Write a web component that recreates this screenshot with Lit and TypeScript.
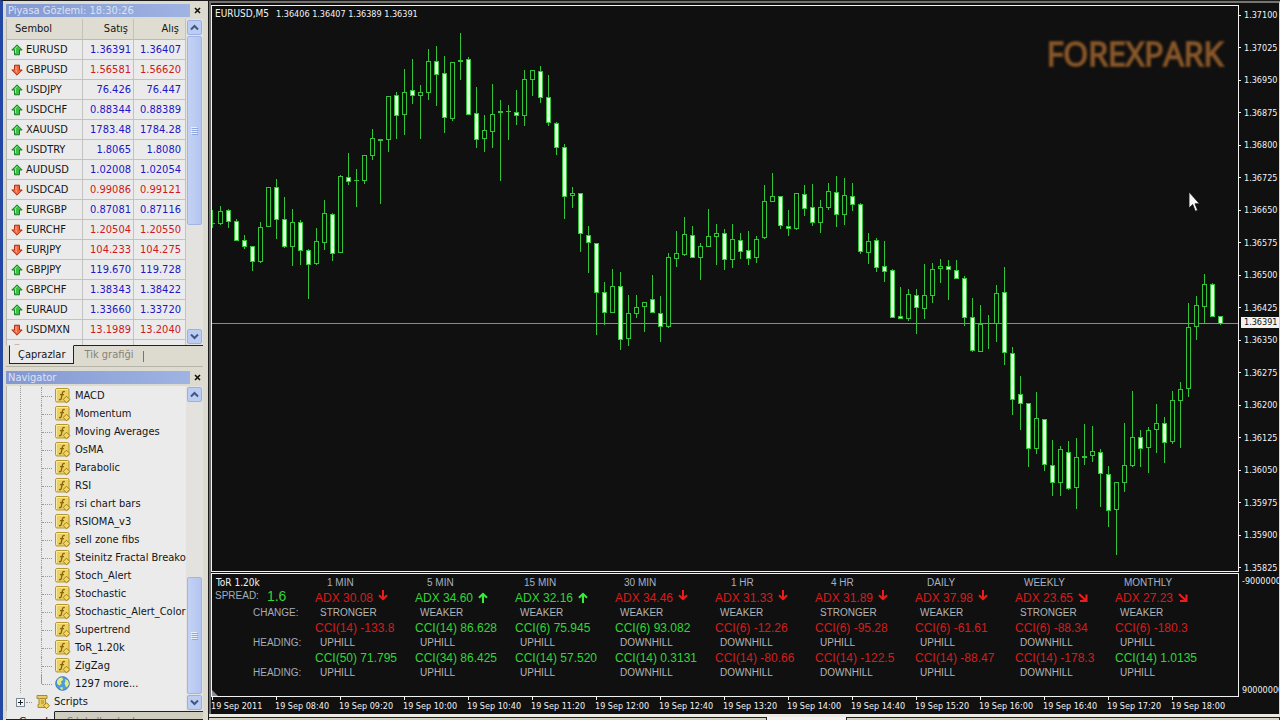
import { LitElement, html, svg, css } from "lit";
import { customElement, state } from "lit/decorators.js";
import { classMap } from "lit/directives/class-map.js";

type Quote = [symbol: string, bid: string, ask: string, up: boolean];
const QUOTES: Quote[] = [
  ["EURUSD", "1.36391", "1.36407", true],
  ["GBPUSD", "1.56581", "1.56620", false],
  ["USDJPY", "76.426", "76.447", true],
  ["USDCHF", "0.88344", "0.88389", true],
  ["XAUUSD", "1783.48", "1784.28", true],
  ["USDTRY", "1.8065", "1.8080", true],
  ["AUDUSD", "1.02008", "1.02054", true],
  ["USDCAD", "0.99086", "0.99121", false],
  ["EURGBP", "0.87081", "0.87116", true],
  ["EURCHF", "1.20504", "1.20550", false],
  ["EURJPY", "104.233", "104.275", false],
  ["GBPJPY", "119.670", "119.728", true],
  ["GBPCHF", "1.38343", "1.38422", true],
  ["EURAUD", "1.33660", "1.33720", true],
  ["USDMXN", "13.1989", "13.2040", false],
  ["", "", "", false],
];

const INDICATORS = [
  "MACD", "Momentum", "Moving Averages", "OsMA", "Parabolic", "RSI",
  "rsi chart bars", "RSIOMA_v3", "sell zone fibs", "Steinitz Fractal Breakout",
  "Stoch_Alert", "Stochastic", "Stochastic_Alert_Color", "Supertrend",
  "ToR_1.20k", "ZigZag",
];

const PRICES = [
  "1.37100", "1.37025", "1.36950", "1.36875", "1.36800", "1.36725",
  "1.36650", "1.36575", "1.36500", "1.36425", "1.36350", "1.36275",
  "1.36200", "1.36125", "1.36050", "1.35975", "1.35900", "1.35825",
];

const TIMES = [
  "2011", "08:40", "09:20", "10:00", "10:40", "11:20", "12:00", "12:40",
  "13:20", "14:00", "14:40", "15:20", "16:00", "16:40", "17:20", "18:00",
];

// Each bar: high, body top, body bottom, low; the last item is 1 for a falling bar.
const STEP = 8;
const LEFT = 212;
const TOP = 6;
const LAST_PRICE = 323;
const BARS: [number, number, number, number, number][] = [
  [210, 223, 224, 228, 0], [206, 211, 224, 225, 0], [209, 210, 222, 228, 1],
  [219, 221, 241, 241, 1], [235, 240, 247, 249, 1], [246, 246, 262, 271, 1],
  [222, 227, 262, 263, 0], [187, 187, 227, 227, 0], [179, 187, 220, 239, 1],
  [197, 219, 247, 248, 1], [209, 222, 247, 266, 0], [220, 222, 251, 265, 1],
  [249, 250, 265, 299, 1], [228, 241, 264, 265, 0], [200, 213, 243, 250, 0],
  [213, 214, 254, 261, 1], [175, 176, 253, 253, 0], [153, 177, 182, 185, 1],
  [169, 180, 181, 207, 0], [155, 155, 181, 184, 0], [129, 138, 156, 160, 0],
  [139, 139, 141, 204, 0], [96, 96, 140, 152, 0], [92, 95, 116, 139, 1],
  [69, 92, 115, 135, 0], [59, 90, 96, 104, 1], [85, 92, 96, 139, 0],
  [49, 61, 93, 100, 0], [46, 61, 75, 106, 1], [56, 73, 118, 133, 1],
  [62, 62, 119, 121, 0], [33, 60, 62, 80, 0], [57, 59, 115, 115, 1],
  [87, 113, 140, 148, 1], [115, 130, 139, 152, 0], [84, 114, 132, 148, 0],
  [100, 111, 113, 181, 0], [105, 111, 112, 140, 0], [90, 112, 116, 125, 1],
  [70, 79, 116, 126, 0], [70, 70, 80, 96, 0], [66, 71, 98, 103, 1],
  [75, 97, 123, 126, 1], [122, 123, 148, 155, 1], [144, 147, 197, 219, 1],
  [187, 193, 196, 208, 0], [193, 193, 234, 252, 1], [226, 235, 243, 273, 1],
  [243, 243, 293, 335, 1], [282, 292, 313, 325, 1], [269, 286, 313, 313, 0],
  [272, 286, 340, 350, 1], [295, 313, 339, 346, 0], [295, 307, 314, 318, 0],
  [302, 302, 307, 332, 0], [275, 299, 313, 313, 1], [296, 313, 327, 342, 1],
  [253, 257, 327, 328, 0], [231, 253, 259, 267, 0], [217, 234, 255, 256, 0],
  [226, 235, 258, 258, 1], [243, 246, 258, 280, 0], [209, 236, 247, 247, 0],
  [224, 233, 237, 265, 0], [229, 233, 260, 270, 1], [224, 239, 260, 268, 0],
  [233, 240, 252, 259, 1], [231, 250, 259, 265, 1], [236, 239, 258, 263, 0],
  [185, 201, 238, 239, 0], [173, 196, 202, 202, 0], [196, 196, 226, 229, 1],
  [210, 226, 229, 236, 1], [193, 193, 229, 230, 0], [185, 194, 209, 216, 1],
  [184, 207, 223, 226, 1], [200, 207, 223, 233, 0], [183, 191, 208, 210, 0],
  [176, 192, 215, 227, 1], [178, 195, 215, 225, 0], [183, 196, 205, 211, 1],
  [203, 204, 252, 254, 1], [233, 241, 253, 264, 0], [238, 240, 268, 272, 1],
  [241, 266, 272, 282, 1], [269, 270, 318, 318, 1], [287, 316, 319, 319, 1],
  [289, 294, 319, 321, 0], [289, 295, 308, 334, 1], [264, 295, 309, 319, 0],
  [263, 269, 296, 303, 0], [259, 266, 269, 283, 0], [260, 266, 270, 300, 1],
  [260, 270, 279, 279, 1], [276, 278, 318, 326, 1], [298, 317, 351, 352, 1],
  [305, 324, 352, 352, 0], [315, 323, 324, 349, 0], [285, 293, 324, 342, 0],
  [267, 292, 353, 365, 1], [347, 353, 400, 415, 1], [376, 394, 404, 430, 1],
  [403, 403, 449, 467, 1], [392, 418, 449, 454, 0], [419, 419, 465, 471, 1],
  [440, 465, 483, 496, 1], [446, 449, 483, 496, 0], [441, 452, 489, 490, 1],
  [438, 457, 488, 509, 0], [424, 456, 458, 465, 0], [426, 451, 456, 462, 0],
  [449, 452, 474, 507, 1], [466, 474, 511, 527, 1], [482, 482, 510, 555, 0],
  [423, 465, 483, 492, 0], [391, 437, 466, 467, 0], [430, 437, 449, 467, 1],
  [427, 430, 448, 473, 0], [404, 423, 430, 453, 0], [417, 423, 443, 463, 1],
  [391, 400, 442, 444, 0], [382, 389, 401, 448, 0], [303, 327, 389, 397, 0],
  [296, 305, 327, 340, 0], [274, 284, 307, 323, 0], [283, 284, 317, 317, 1],
  [316, 316, 324, 325, 1],
];

type Dir = "up" | "down" | "ease";
interface Frame {
  name: string;
  indent: string;
  adx: string;
  dir: Dir;
  change: string;
  cci: [text: string, good: boolean, heading: string][];
}
const FRAMES: Frame[] = [
  { name: "1 MIN", indent: "mid", adx: "30.08", dir: "down", change: "STRONGER", cci: [["CCI(14) -133.8", false, "UPHILL"], ["CCI(50) 71.795", true, "UPHILL"]] },
  { name: "5 MIN", indent: "mid", adx: "34.60", dir: "up", change: "WEAKER", cci: [["CCI(14) 86.628", true, "UPHILL"], ["CCI(34) 86.425", true, "UPHILL"]] },
  { name: "15 MIN", indent: "near", adx: "32.16", dir: "up", change: "WEAKER", cci: [["CCI(6) 75.945", true, "UPHILL"], ["CCI(14) 57.520", true, "UPHILL"]] },
  { name: "30 MIN", indent: "near", adx: "34.46", dir: "down", change: "WEAKER", cci: [["CCI(6) 93.082", true, "DOWNHILL"], ["CCI(14) 0.3131", true, "DOWNHILL"]] },
  { name: "1 HR", indent: "far", adx: "31.33", dir: "down", change: "WEAKER", cci: [["CCI(6) -12.26", false, "DOWNHILL"], ["CCI(14) -80.66", false, "DOWNHILL"]] },
  { name: "4 HR", indent: "far", adx: "31.89", dir: "down", change: "STRONGER", cci: [["CCI(6) -95.28", false, "UPHILL"], ["CCI(14) -122.5", false, "DOWNHILL"]] },
  { name: "DAILY", indent: "mid", adx: "37.98", dir: "down", change: "WEAKER", cci: [["CCI(6) -61.61", false, "UPHILL"], ["CCI(14) -88.47", false, "UPHILL"]] },
  { name: "WEEKLY", indent: "near", adx: "23.65", dir: "ease", change: "STRONGER", cci: [["CCI(6) -88.34", false, "DOWNHILL"], ["CCI(14) -178.3", false, "DOWNHILL"]] },
  { name: "MONTHLY", indent: "near", adx: "27.23", dir: "ease", change: "WEAKER", cci: [["CCI(6) -180.3", false, "UPHILL"], ["CCI(14) 1.0135", true, "UPHILL"]] },
];

const ARROWS: Record<Dir, string> = {
  down: "M5 0V9M1 5.2L5 9.2L9 5.2",
  up: "M5 13V4M1 7.8L5 3.8L9 7.8",
  ease: "M1 4L8 10.5M8.5 4.5V11H2",
};

const quoteIcon = (up: boolean) => html`<svg class="qicon" viewBox="0 0 12 12" width="12" height="12" aria-hidden="true">
  ${up
    ? svg`<path d="M6 .8L11.2 6H8.5V10.8H3.5V6H.8Z" fill="#3fc044" stroke="#1b7a2a"/><path d="M6 2.5L4.5 4.5V9" fill="none" stroke="#9bec98"/>`
    : svg`<path d="M6 11.2L11.2 6H8.5V1.2H3.5V6H.8Z" fill="#f0643c" stroke="#a33218"/><path d="M5 2.5V7L6 8.5" fill="none" stroke="#ffb498"/>`}
</svg>`;

const fIcon = html`<svg class="ticon" viewBox="0 0 16 16" width="16" height="16" aria-hidden="true">
  <rect x=".5" y=".5" width="13.5" height="13.5" rx="1.5" fill="#ecd163" stroke="#b8962e"/>
  <path d="M1.5 13V1.5H13" fill="none" stroke="#f8eaa0"/>
  <path d="M9.8 3.6C8.2 2.8 7.6 4 7.3 5.6L6.3 10.4C6.1 11.6 5.2 12 4 11.4M5 6.6H9" fill="none" stroke="#8a6510" stroke-width="1.4"/>
  <path d="M11.5 8.2L14.8 11.5L11.5 14.8L8.2 11.5Z" fill="#f2d95c" stroke="#a07c1c"/>
</svg>`;

const globeIcon = html`<svg class="ticon" viewBox="0 0 16 16" width="16" height="16" aria-hidden="true">
  <circle cx="7.5" cy="7.5" r="6.8" fill="#4f9be0" stroke="#3b76b8"/>
  <path d="M2 5C3 2 6 1 7.5 1.5L8 4L6 5.5L6.5 8L4 9.5L2 7.5ZM10 3L13 4.5L14 8L12 11.5L10.5 10L9.5 7L10.5 5.5ZM5.5 11L8 11.5L7.5 14L5.5 13Z" fill="#e2ec7c"/>
</svg>`;

const scriptIcon = html`<svg class="ticon" viewBox="0 0 16 16" width="16" height="16" aria-hidden="true">
  <path d="M2 1.5H12V4.5H10.5V10.5H12.5V13.5H3V10.5H4V4.5H2Z" fill="#e8cd62" stroke="#a88a30"/>
  <path d="M4.5 4.5H10M6 7H9M6 9H9" stroke="#a88a30"/>
  <path d="M11.5 8.7L14.5 11.7L11.5 14.7L8.5 11.7Z" fill="#f2d95c" stroke="#a07c1c"/>
</svg>`;

const chevron = (up: boolean) => html`<svg viewBox="0 0 9 9" width="9" height="9" aria-hidden="true">
  <path d=${up ? "M1 6.5L4.5 3L8 6.5" : "M1 2.5L4.5 6L8 2.5"} fill="none" stroke="#43567e" stroke-width="2"/>
</svg>`;

@customElement("app-root")
export class AppRoot extends LitElement {
  @state() private tab = 0;

  static styles = css`
    :host {
      display: flex;
      height: 100vh;
      min-height: 600px;
      overflow: hidden;
      background: #101010;
      font-family: "DejaVu Sans Condensed", "Liberation Sans", sans-serif;
      font-size: 11px;
      line-height: 14px;
      color: #151515;
    }
    * { box-sizing: border-box; }
    button { font: inherit; color: inherit; border: 0; padding: 0; background: none; }
    ul, h2 { margin: 0; padding: 0; list-style: none; font-weight: normal; font-size: inherit; }

    .side {
      flex: none;
      width: 208px;
      display: flex;
      flex-direction: column;
      padding: 3px 5px 0 3px;
      background: #dddbd0;
      border-left: 3px solid #2348a4;
      border-top: 1px solid #1a1a1a;
    }
    .title {
      flex: none;
      display: flex;
      height: 13px;
      margin: 0 -2px 2px 0;
    }
    .title h2 {
      flex: 1;
      line-height: 13px;
      padding-left: 2px;
      color: #dde3f2;
      background: linear-gradient(90deg, #8398d2, #9fb4e2);
    }
    .close { width: 15px; display: grid; place-items: center; }
    .market { flex: none; display: flex; height: 326px; overflow: hidden; }
    .pane { flex: 1; min-width: 0; overflow: hidden; background: #ebebeb; border-left: 1px solid #b9b8b0; }
    table { width: 100%; border-collapse: separate; border-spacing: 0; table-layout: fixed; }
    th { height: 21px; padding: 0; font-weight: normal; background: #dfddd1; border-bottom: 1px solid #bcbaae; border-right: 1px solid #c4c2b6; }
    td { height: 20px; padding: 0; border-bottom: 1px solid #c2c2c0; border-right: 1px solid #c2c2c0; }
    .c1 { width: 76px; }
    .c2 { width: 51px; }
    .num { text-align: right; padding-right: 2px; }
    .num.ask { padding-right: 4px; }
    th.num { padding-right: 5px; }
    th.num.ask { padding-right: 6px; }
    th.sym { text-align: left; padding-left: 8px; }
    .sym span { display: flex; align-items: center; gap: 3px; padding-left: 4px; }
    .rise { color: #2216c6; }
    .fall { color: #cf1820; }

    .scroll { flex: none; width: 17px; display: flex; flex-direction: column; gap: 1px; padding: 1px; background: #e3e2de; }
    .scroll button { flex: none; height: 15px; display: grid; place-items: center; background: #bccdf3; border: 1px solid #9cb1e2; border-radius: 2px; }
    .thumb { display: grid; place-items: center; background: linear-gradient(90deg, #c3d2f5, #b3c5f0); border: 1px solid #a2b5e4; border-radius: 2px; }
    .rest { flex: 1; }
    .thumb.tall { flex: none; height: 189px; }
    .thumb.low { flex: none; height: 117px; }

    .tabs { flex: none; display: flex; height: 22px; border-bottom: 1px solid #b7b5a8; margin-bottom: 4px; padding: 0 0 2px 3px; }
    .tabs button { height: 19px; padding: 0 10px; border-top: 1px solid #222; color: #85837a; }
    .tabs button.on { background: #ebebeb; color: #151515; border: 1px solid #222; border-top-color: #ebebeb; padding: 0 8px; }
    .tabs .fill { flex: 1; border-top: 1px solid #222; padding-top: 5px; }
    .tabs .fill::before { content: ""; display: block; width: 1px; height: 11px; background: #77756c; }
    .nav { flex: 1; min-height: 0; display: flex; overflow: hidden; }
    .navtabs { flex: none; display: flex; height: 9px; overflow: hidden; border-bottom: 1px solid #222; padding-left: 1px; }
    .navtabs button { height: 20px; padding: 1px 12px; border-top: 1px solid #222; color: #85837a; background: #cfcdbf; white-space: nowrap; flex: 1; text-align: left; overflow: hidden; }
    .navtabs button.on { flex: none; width: 48px; background: #ebebeb; color: #151515; border-top-color: #ebebeb; border-right: 1px solid #222; }

    .tree { padding-top: 1px; margin-left: 13px; border-left: 1px dotted #9a9a9a; }
    .leaves { margin-left: 20px; }
    .leaves li { display: flex; align-items: center; height: 18px; border-left: 1px dotted #9a9a9a; white-space: nowrap; }
    .leaves li.last { border-left: 0; padding-left: 1px; background: linear-gradient(#9a9a9a, #9a9a9a) 0 0 / 1px 9px no-repeat; }
    .leaves li::before { content: ""; flex: none; width: 10px; margin-right: 3px; border-top: 1px dotted #9a9a9a; }
    .ticon { flex: none; margin-right: 4px; }
    .branch { display: flex; align-items: center; height: 18px; margin-left: -5px; background: #ebebeb; }
    .branch::before { content: ""; order: 1; width: 6px; margin: 0 3px 0 1px; border-top: 1px dotted #9a9a9a; }
    .branch .ticon { order: 2; margin-right: 3px; }
    .branch .label { order: 3; }
    .expand { width: 9px; height: 9px; border: 1px solid #7c8797; background: linear-gradient(#222, #222) center / 5px 1px no-repeat, linear-gradient(#222, #222) center / 1px 5px no-repeat, #f6f6f6; }

    .work {
      flex: 1;
      min-width: 0;
      display: flex;
      flex-direction: column;
      border-left: 1px solid #1a1a1a;
      color: #f2f2f2;
      font-size: 9px;
      line-height: 12px;
    }
    .window { flex: 1; min-height: 0; display: flex; border-top: 1px solid #1a1a1a; }
    .bezel { flex: 1; min-width: 0; display: grid; grid-template-columns: minmax(0, 1fr) 40px; grid-template-rows: minmax(0, 1fr) 124px 16px; row-gap: 1px; border-left: 2px solid #6c6c6c; border-top: 2px solid #77736f; padding-top: 2px; border-right: 1px solid #d8d8d8; }
    .plot { position: relative; border: 1px solid #f2f2f2; overflow: hidden; }
    .candles { display: block; width: 100%; height: 100%; shape-rendering: crispEdges; }
    .quote { position: absolute; left: 3px; top: 2px; display: flex; gap: 7px; }
    .quote b { font-weight: normal; font-size: 10px; }
    .brand { position: absolute; right: 15px; top: 28px; font: 400 32px/40px "Open Sans", "Noto Sans", sans-serif; color: #8a5a2c; -webkit-text-stroke: 2px #70451f; paint-order: stroke fill; filter: blur(1px); }
    .pointer { position: absolute; right: 38px; top: 185px; }
    .prices { position: relative; display: flex; flex-direction: column; justify-content: space-between; padding-top: 6px; }
    .prices span { display: flex; align-items: center; gap: 3px; line-height: 8px; }
    .prices span::before { content: ""; width: 2px; height: 1px; background: #f2f2f2; }
    .prices .now { position: absolute; left: 2px; right: 0; line-height: 11px; padding-left: 3px; background: #f2f2f2; color: #111; }
    .prices .now::before { display: none; }

    .tor { position: relative; display: flex; border: 1px solid #f2f2f2; padding: 3px 0 0 3px; overflow: hidden; font-family: "Liberation Sans", Arial, sans-serif; font-size: 10px; color: #b4b4b4; white-space: nowrap; }
    .tor::after { content: ""; position: absolute; left: 0; bottom: 0; border: 3px solid transparent; border-left-color: #8c8c94; border-bottom-color: #8c8c94; }
    .rows { display: grid; grid-template-rows: 12px 18px 12px 18px 12px 18px 12px; align-items: center; }
    .legend { width: 100px; flex: none; }
    .legend .name { font-family: "DejaVu Sans Condensed", sans-serif; font-size: 10px; color: #f2f2f2; padding-left: 1px; }
    .legend .cell { padding-left: 38px; color: #a6acb8; }
    .spread { display: flex; align-items: center; gap: 8px; align-self: start; height: 14px; color: #a6acb8; }
    .spread b { font-weight: normal; font-size: 14px; }
    .frames { flex: 1; display: flex; }
    .frame { width: 100px; flex: none; }
    .frame .head { color: #a6b2c2; }
    .near { padding-left: 9px; }
    .mid { padding-left: 12px; }
    .far { padding-left: 16px; }
    .value { display: flex; align-items: center; gap: 5px; font-size: 12px; }
    .state { padding-left: 5px; }
    .good { color: #2fd636; }
    .bad { color: #d81c1c; }
    .value svg { flex: none; }
    .range { display: flex; flex-direction: column; justify-content: space-between; padding: 2px 0 1px 3px; overflow: hidden; }

    .times { display: flex; overflow: hidden; white-space: nowrap; margin-top: -1px; }
    .times span { flex: none; width: 64px; display: flex; flex-direction: column; }
    .times span::before { content: ""; width: 1px; height: 3px; margin-left: 1px; background: #f2f2f2; }

    .windows { flex: none; height: 6px; display: flex; border-top: 3px solid #eceae2; }
    .windows i { background: #d3d5c6; border-top: 1px solid #222; border-right: 1px solid #222; flex: 559; }
    .windows i + i { flex: 79; background: #f2f2f2; border-top: 0; }
    .windows i + i + i { flex: 433; background: #d3d5c6; border-top: 1px solid #222; }
  `;

  private closeButton(label: string) {
    return html`<button class="close" aria-label=${label}><svg viewBox="0 0 7 7" width="7" height="7" aria-hidden="true"><path d="M1 1L6 6M6 1L1 6" stroke="#111" stroke-width="1.6"/></svg></button>`;
  }

  private grip() {
    return html`<svg viewBox="0 0 7 8" width="7" height="8" aria-hidden="true"><path d="M0 .5H6M0 2.5H6M0 4.5H6M0 6.5H6" stroke="#e9f0fd"/><path d="M1 1.5H7M1 3.5H7M1 5.5H7M1 7.5H7" stroke="#8ea7dc"/></svg>`;
  }

  private bar([high, top, bottom, low, falling]: (typeof BARS)[number], i: number) {
    const x = LEFT + i * STEP;
    const thin = bottom - top < 3;
    return svg`
      <rect x=${x} y=${high} width="1" height=${Math.max(low - high, 1)} fill="#33c437"/>
      <rect x=${x - 2} y=${top} width="5" height=${bottom - top} fill="#33c437"/>
      ${thin ? null : svg`<rect x=${x - 1} y=${top + 1} width="3" height=${bottom - top - 2} fill=${falling ? "#e2fbe0" : "#101010"}/>`}
    `;
  }

  render() {
    return html`
      <aside class="side">
        <div class="title"><h2>Piyasa Gözlemi: 18:30:26</h2>${this.closeButton("Piyasa Gözlemi penceresini kapat")}</div>
        <div class="market">
          <div class="pane">
            <table>
              <thead><tr><th class="sym c1">Sembol</th><th class="num c2">Satış</th><th class="num ask">Alış</th></tr></thead>
              <tbody>
                ${QUOTES.map(([symbol, bid, ask, up]) => {
                  const tone = classMap({ rise: up, fall: !up });
                  return html`<tr>
                    <td class="sym"><span>${quoteIcon(up)}${symbol}</span></td>
                    <td class="num ${tone}">${bid}</td>
                    <td class="num ask ${tone}">${ask}</td>
                  </tr>`;
                })}
              </tbody>
            </table>
          </div>
          <div class="scroll">
            <button aria-label="Yukarı">${chevron(true)}</button>
            <div class="thumb tall">${this.grip()}</div>
            <div class="rest"></div>
            <button aria-label="Aşağı">${chevron(false)}</button>
          </div>
        </div>
        <div class="tabs">
          ${["Çaprazlar", "Tik grafiği"].map((name, i) => html`<button class=${classMap({ on: this.tab === i })} @click=${() => (this.tab = i)}>${name}</button>`)}
          <div class="fill"></div>
        </div>
        <div class="title"><h2>Navigator</h2>${this.closeButton("Navigator penceresini kapat")}</div>
        <div class="nav">
          <div class="pane">
            <div class="tree">
              <ul class="leaves">
                ${INDICATORS.map((name) => html`<li>${fIcon}${name}</li>`)}
                <li class="last">${globeIcon}1297 more...</li>
              </ul>
              <div class="branch"><button class="expand" aria-label="Scripts klasörünü aç"></button>${scriptIcon}<span class="label">Scripts</span></div>
            </div>
          </div>
          <div class="scroll">
            <button aria-label="Yukarı">${chevron(true)}</button>
            <div class="rest"></div>
            <div class="thumb low">${this.grip()}</div>
            <button aria-label="Aşağı">${chevron(false)}</button>
          </div>
        </div>
        <div class="navtabs"><button class="on">Genel</button><button>Sık kullanılanlar</button></div>
      </aside>

      <main class="work">
        <div class="window"><div class="bezel">
          <section class="plot">
            <svg class="candles" role="img" aria-label="EURUSD M5">
              <g transform="translate(${-LEFT} ${-TOP})">
                <rect x=${LEFT} y=${LAST_PRICE} width="100%" height="1" fill="#868a8c"/>
                ${BARS.map((b, i) => this.bar(b, i))}
              </g>
            </svg>
            <div class="quote"><b>EURUSD,M5</b><span>1.36406 1.36407 1.36389 1.36391</span></div>
            <div class="brand">FOREXPARK</div>
            <svg class="pointer" viewBox="0 0 12 22" width="12" height="22" aria-hidden="true"><path d="M1 1V17L4.7 13.6L7.3 20.3L9.7 19.3L7 12.8H11.5Z" fill="#f6f6f6" stroke="#111" stroke-width=".8"/></svg>
          </section>
          <div class="prices">
            ${PRICES.map((p) => html`<span>${p}</span>`)}
            <span class="now" style="top:${LAST_PRICE - TOP - 5}px">1.36391</span>
          </div>

          <section class="tor">
            <div class="rows legend">
              <div class="name">ToR 1.20k</div>
              <div class="spread">SPREAD: <b class="good">1.6</b></div>
              <div class="cell">CHANGE:</div><div></div>
              <div class="cell">HEADING:</div><div></div>
              <div class="cell">HEADING:</div>
            </div>
            <div class="frames">
              ${FRAMES.map((f) => html`<div class="rows frame">
                <div class="head ${f.indent}">${f.name}</div>
                <div class="value ${f.dir === "up" ? "good" : "bad"}">ADX ${f.adx}
                  <svg viewBox="0 0 10 16" width="10" height="16" aria-hidden="true"><path d=${ARROWS[f.dir]} fill="none" stroke=${f.dir === "up" ? "#35ee3c" : "#f01c1c"} stroke-width="2"/></svg>
                </div>
                <div class="state">${f.change}</div>
                ${f.cci.map(([text, good, heading]) => html`<div class="value ${good ? "good" : "bad"}">${text}</div><div class="state">${heading}</div>`)}
              </div>`)}
            </div>
          </section>
          <div class="range"><span>-90000000</span><span>90000000</span></div>

          <div class="times">${TIMES.map((t) => html`<span>19 Sep ${t}</span>`)}</div>
        </div></div>
        <div class="windows"><i></i><i></i><i></i></div>
      </main>
    `;
  }
}
